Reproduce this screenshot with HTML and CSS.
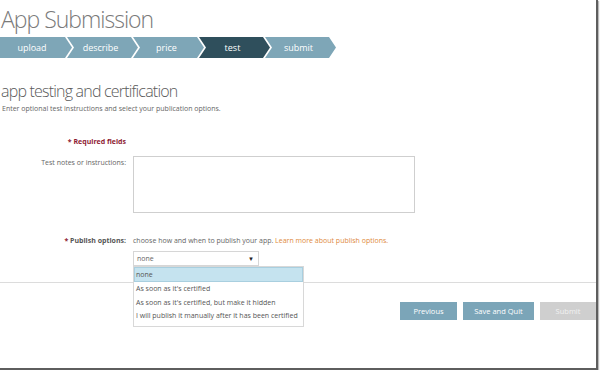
FILE: index.html
```html
<!DOCTYPE html>
<html>
<head>
<meta charset="utf-8">
<link rel="stylesheet" href="styles.css">
</head>
<body>
<div class="frame">
  <h1 class="title">App Submission</h1>
  <nav class="steps">
    <div class="step first">upload</div>
    <div class="step">describe</div>
    <div class="step">price</div>
    <div class="step active">test</div>
    <div class="step">submit</div>
  </nav>
  <h2 class="heading">app testing and certification</h2>
  <p class="intro">Enter optional test instructions and select your publication options.</p>

  <div class="row req-row">
    <div class="label req">* Required fields</div>
  </div>
  <div class="row notes-row">
    <div class="label">Test notes or instructions:</div>
    <div class="field"><div class="textarea"></div></div>
  </div>
  <div class="row publish-row">
    <div class="label strong"><span class="star">*</span> Publish options:</div>
    <div class="field">choose how and when to publish your app. <span class="link">Learn more about publish options.</span></div>
  </div>
  <div class="row select-row">
    <div class="label"></div>
    <div class="field select-wrap">
      <div class="select"><span>none</span><span class="caret">&#9660;</span></div>
      <ul class="menu">
        <li class="sel">none</li>
        <li>As soon as it's certified</li>
        <li>As soon as it's certified, but make it hidden</li>
        <li>I will publish it manually after it has been certified</li>
      </ul>
    </div>
  </div>
  <div class="divider"></div>
  <div class="actions">
    <button class="btn">Previous</button>
    <button class="btn wide">Save and Quit</button>
    <button class="btn off">Submit</button>
  </div>
</div>
</body>
</html>
```

FILE: styles.css
```css
* { box-sizing: border-box; }
html, body { margin: 0; padding: 0; background: #fff; }
body { font-family: "Open Sans", "Noto Sans", sans-serif; color: #666; }
.frame {
  width: 598px;
  height: 370px;
  border-right: 2px solid #5e5e5e;
  border-bottom: 2px solid #5e5e5e;
  box-shadow: 1px 1px 1px #bbb;
  overflow: hidden;
}
.title {
  margin: 0;
  padding: 4px 0 0 1px;
  font-size: 23px;
  line-height: 30px;
  font-weight: 300;
  color: #7a7a7a;
  letter-spacing: -1px;
}
.steps {
  display: flex;
  margin-top: 3px;
  height: 21px;
}
.step {
  width: 71px;
  margin-left: -5px;
  background: #7ea6b7;
  color: #fff;
  font-size: 9px;
  line-height: 21px;
  text-align: center;
  padding-right: 4px;
  clip-path: polygon(0 0, calc(100% - 7px) 0, 100% 50%, calc(100% - 7px) 100%, 0 100%, 7px 50%);
}
.step.first {
  width: 72px;
  margin-left: 0;
  padding-right: 8px;
  clip-path: polygon(0 0, calc(100% - 7px) 0, 100% 50%, calc(100% - 7px) 100%, 0 100%);
}
.step.active { background: #2f4f5c; }
.heading {
  margin: 22px 0 0 1px;
  font-size: 16px;
  line-height: 22px;
  font-weight: 300;
  color: #5a5a5a;
  letter-spacing: -0.8px;
}
.intro {
  margin: 2px 0 0 2px;
  font-size: 7px;
  line-height: 10px;
  color: #666;
}
.row { display: flex; gap: 7px; }
.label {
  width: 126px;
  flex: none;
  text-align: right;
  font-size: 7px;
  line-height: 10px;
  color: #666;
}
.field { font-size: 7px; line-height: 10px; color: #666; }
.req-row { margin-top: 23px; }
.req { color: #8e1b33; font-weight: 700; }
.notes-row { margin-top: 9px; }
.notes-row .label { padding-top: 2px; }
.textarea {
  width: 282px;
  height: 57px;
  border: 1px solid #cfcfcf;
  background: #fff;
}
.publish-row { margin-top: 23px; }
.strong { font-weight: 700; color: #555; }
.star { color: #8e1b33; }
.link { color: #e08a3c; }
.select-row { margin-top: 5px; }
.select-wrap { position: relative; }
.select {
  width: 126px;
  height: 15px;
  border: 1px solid #d6d6d6;
  display: flex;
  justify-content: space-between;
  align-items: center;
  padding: 0 4px 0 3px;
  background: #fff;
}
.caret { font-size: 6px; color: #222; }
.menu {
  position: absolute;
  left: 0;
  top: 15px;
  width: 171px;
  margin: 0;
  padding: 0 0 3px 0;
  list-style: none;
  background: #fff;
  border: 1px solid #d8d8d8;
  z-index: 2;
}
.menu li {
  font-size: 7px;
  line-height: 13.5px;
  padding-left: 2px;
  color: #555;
  white-space: nowrap;
}
.menu li.sel {
  background: #c5e3ef;
  border: 1px solid #a9cfdf;
  line-height: 13px;
  padding-left: 1px;
}
.divider {
  margin-top: 16px;
  height: 1px;
  background: #dcdcdc;
}
.actions {
  display: flex;
  justify-content: flex-end;
  gap: 6px;
  margin-top: 19px;
}
.btn {
  border: none;
  height: 18px;
  width: 57px;
  padding: 0;
  background: #7ba5b8;
  color: #fff;
  font-family: "Open Sans", sans-serif;
  font-size: 7.5px;
}
.btn.wide { width: 71px; }
.btn.off { background: #cfcfcf; color: #f2f2f2; width: 56px; }
```
